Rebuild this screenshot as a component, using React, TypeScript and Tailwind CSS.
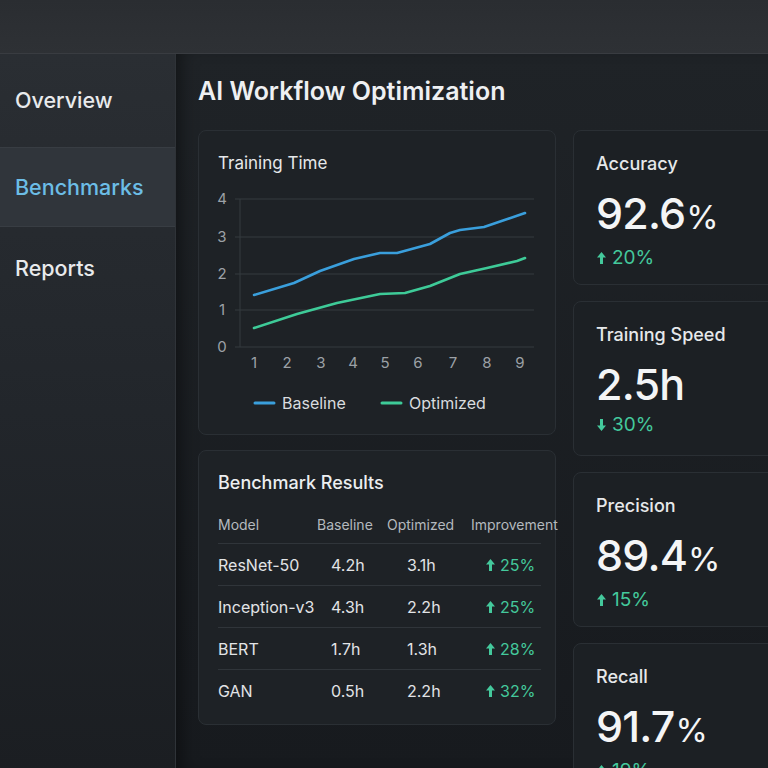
import React from "react";

const baseline: [number, number][] = [
  [55, 120], [95, 108], [121, 96], [155, 84], [181, 78], [198, 78],
  [231, 69], [251, 58], [261, 55], [285, 52], [326, 38],
];
const optimized: [number, number][] = [
  [55, 153], [98, 139], [138, 128], [181, 119], [206, 118], [231, 111],
  [261, 99], [288, 93], [318, 86], [326, 83],
];
const gridY = [172, 135, 99, 62, 24];
const xTicks = [55, 88, 122, 154, 186, 219, 254, 288, 321];

const toPoints = (pts: [number, number][]) => pts.map((p) => p.join(",")).join(" ");

function Arrow({ down = false }: { down?: boolean }) {
  return (
    <svg width="11" height="14" viewBox="0 0 11 14" className={down ? "rotate-180" : ""}>
      <path d="M5.5 1 L10 6.5 H7 V13 H4 V6.5 H1 Z" fill="currentColor" />
    </svg>
  );
}

function TrainingChart() {
  return (
    <div className="h-[305px] rounded-lg border border-[#2a2f34] bg-[#1e2226] pt-[20px]">
      <div className="pl-[19px] text-[17px] leading-[24px] text-[#e6e8ea]">Training Time</div>
      <svg width="358" height="250" viewBox="0 0 358 250" className="block">
        {gridY.map((y) => (
          <line key={y} x1="36" x2="335" y1={y} y2={y} stroke="#353a3f" strokeWidth="1" />
        ))}
        <line x1="41" x2="41" y1="24" y2="172" stroke="#353a3f" strokeWidth="1" />
        {gridY.map((y, i) => (
          <text key={i} x="23" y={y + 5} textAnchor="middle" fontSize="15" fill="#9ca1a6">
            {i}
          </text>
        ))}
        {xTicks.map((x, i) => (
          <text key={x} x={x} y="193" textAnchor="middle" fontSize="15" fill="#9ca1a6">
            {i + 1}
          </text>
        ))}
        <polyline points={toPoints(baseline)} fill="none" stroke="#3a9fdc" strokeWidth="2.6" strokeLinejoin="round" strokeLinecap="round" />
        <polyline points={toPoints(optimized)} fill="none" stroke="#3ecb98" strokeWidth="2.6" strokeLinejoin="round" strokeLinecap="round" />
        <line x1="56" x2="75" y1="228" y2="228" stroke="#3a9fdc" strokeWidth="3" strokeLinecap="round" />
        <text x="83" y="234" fontSize="16" fill="#d9dcdf">Baseline</text>
        <line x1="183" x2="202" y1="228" y2="228" stroke="#3ecb98" strokeWidth="3" strokeLinecap="round" />
        <text x="210" y="234" fontSize="16" fill="#d9dcdf">Optimized</text>
      </svg>
    </div>
  );
}

const rows = [
  { model: "ResNet-50", base: "4.2h", opt: "3.1h", imp: "25%" },
  { model: "Inception-v3", base: "4.3h", opt: "2.2h", imp: "25%" },
  { model: "BERT", base: "1.7h", opt: "1.3h", imp: "28%" },
  { model: "GAN", base: "0.5h", opt: "2.2h", imp: "32%" },
];

function BenchmarkTable() {
  return (
    <div className="h-[275px] rounded-lg border border-[#2a2f34] bg-[#1e2226] pl-[19px] pr-[14px] pt-[20px]">
      <div className="text-[18px] font-medium leading-[24px] text-[#eceef0]">Benchmark Results</div>
      <div className="mt-[20px] grid grid-cols-[99px_70px_83px_1fr] pb-[8px] text-[14px] leading-[20px] text-[#b4b9be] whitespace-nowrap">
        <div>Model</div>
        <div>Baseline</div>
        <div>Optimized</div>
        <div className="pl-[1px]">Improvement</div>
      </div>
      <div className="divide-y divide-[#30353a] border-t border-[#30353a]">
        {rows.map((r) => (
          <div key={r.model} className="grid h-[42px] grid-cols-[99px_70px_83px_1fr] items-center text-[16px] text-[#e2e4e6]">
            <div className="whitespace-nowrap">{r.model}</div>
            <div className="pl-[14px]">{r.base}</div>
            <div className="pl-[20px]">{r.opt}</div>
            <div className="flex items-center gap-[4px] pl-[15px] text-[#44c99c]">
              <Arrow />
              {r.imp}
            </div>
          </div>
        ))}
      </div>
    </div>
  );
}

type Stat = { label: string; value: string; unit: string; change: string; down?: boolean };

const stats: Stat[] = [
  { label: "Accuracy", value: "92.6", unit: "%", change: "20%" },
  { label: "Training Speed", value: "2.5h", unit: "", change: "30%", down: true },
  { label: "Precision", value: "89.4", unit: "%", change: "15%" },
  { label: "Recall", value: "91.7", unit: "%", change: "19%" },
];

function StatCard({ stat }: { stat: Stat }) {
  return (
    <div className="h-[155px] w-[215px] shrink-0 rounded-lg border border-[#2a2f34] bg-[#1c2024] pl-[22px] pt-[21px]">
      <div className="text-[18px] font-medium leading-[24px] text-[#e6e8ea]">{stat.label}</div>
      <div className="mt-[12px] flex items-baseline leading-[50px] text-[#f4f5f6]">
        <span className="text-[43px] font-medium tracking-[-0.8px]">{stat.value}</span>
        {stat.unit && <span className="ml-[1px] text-[33px]">{stat.unit}</span>}
      </div>
      <div className="mt-[4px] flex items-center gap-[5px] text-[19px] leading-[24px] text-[#44c99c]">
        <Arrow down={stat.down} />
        {stat.change}
      </div>
    </div>
  );
}

export default function App() {
  const navItems = [
    { name: "Overview", h: "h-[93px]" },
    { name: "Benchmarks", h: "h-[80px]", active: true },
    { name: "Reports", h: "h-[82px]" },
  ];

  return (
    <div className="flex h-[768px] w-[768px] flex-col overflow-hidden bg-[#1a1d21] font-['Inter',sans-serif]">
      <header className="h-[54px] shrink-0 border-b border-[#393c41] bg-gradient-to-b from-[#2a2d31] to-[#2e3135]" />
      <div className="flex min-h-0 flex-1">
        <aside className="w-[176px] shrink-0 border-r border-[#2f3338] bg-gradient-to-b from-[#2a2e33] via-[#22262b] to-[#1b1e22]">
          {navItems.map((item) => (
            <div
              key={item.name}
              className={
                item.active
                  ? `${item.h} flex items-center border-y border-[#383d43] bg-[#30353b] pl-[15px] text-[21.5px] font-medium text-[#6cbde6]`
                  : `${item.h} flex items-center pl-[15px] text-[21.5px] font-medium text-[#e8eaec]`
              }
            >
              {item.name}
            </div>
          ))}
        </aside>
        <main className="flex-1 bg-gradient-to-b from-[#1f2327] to-[#171a1e] pl-[22px] pt-[21px] shadow-[inset_14px_0_18px_-10px_rgba(0,0,0,0.45)]">
          <h1 className="text-[25px] font-semibold leading-[32px] text-[#eef0f2]">AI Workflow Optimization</h1>
          <div className="mt-[23px] flex gap-[17px]">
            <div className="flex w-[358px] shrink-0 flex-col gap-[15px]">
              <TrainingChart />
              <BenchmarkTable />
            </div>
            <div className="flex flex-col gap-[16px]">
              {stats.map((s) => (
                <StatCard key={s.label} stat={s} />
              ))}
            </div>
          </div>
        </main>
      </div>
    </div>
  );
}
